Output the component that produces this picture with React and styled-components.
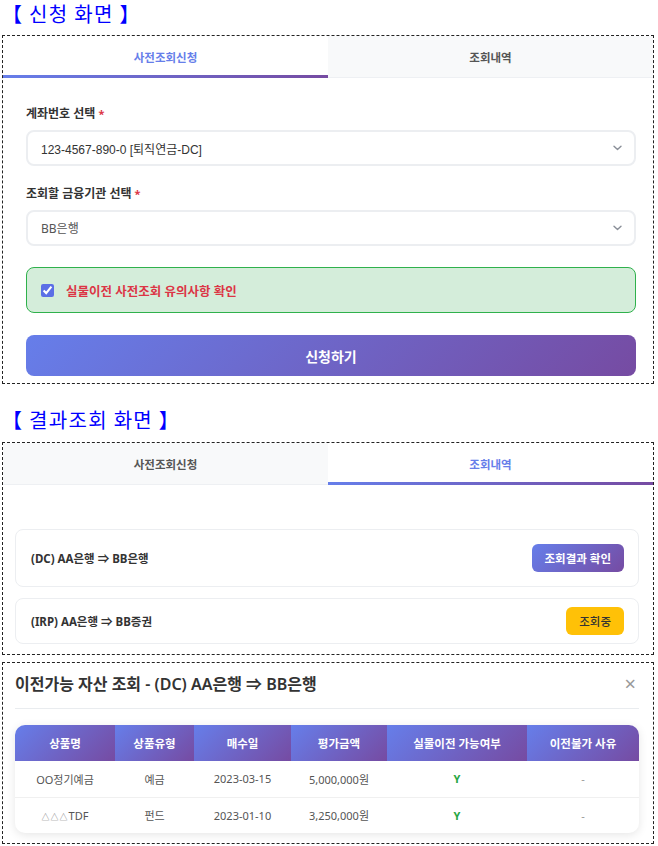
import React from 'react';
import styled, { createGlobalStyle, css } from 'styled-components';

const GRAD = 'linear-gradient(135deg, #667eea 0%, #764ba2 100%)';
const FONT = '"Noto Sans", "Noto Sans CJK KR", sans-serif';

const GlobalStyle = createGlobalStyle`
  * { box-sizing: border-box; }
  body {
    margin: 0;
    background: #ffffff;
    font-family: ${FONT};
    color: #333;
  }
`;

const Page = styled.div`
  width: 652px;
  margin-left: 2px;
  display: flex;
  flex-direction: column;
`;

const SectionTitle = styled.h2`
  margin: ${(p) => p.$mt || 0}px 0 0 0;
  height: 28px;
  line-height: 28px;
  font-family: "Noto Sans CJK KR", sans-serif;
  font-size: 20px;
  font-weight: 400;
  letter-spacing: 1.3px;
  color: #0000ff;
  white-space: pre;
`;

const Panel = styled.section`
  margin-top: ${(p) => p.$mt || 0}px;
  border: 1px dashed #222;
  background: #fff;
`;

const TabBar = styled.div`
  display: flex;
  border-bottom: 1px solid #eef0f3;
`;

const Tab = styled.div`
  position: relative;
  flex: 1;
  height: 41px;
  display: flex;
  align-items: center;
  justify-content: center;
  font-size: 11.5px;
  font-weight: 700;
  color: ${(p) => (p.$active ? '#667eea' : '#555')};
  background: ${(p) => (p.$active ? '#fff' : '#f8f9fa')};
  ${(p) =>
    p.$active &&
    css`
      &::after {
        content: '';
        position: absolute;
        left: 0;
        right: 0;
        bottom: -1px;
        height: 3px;
        background: linear-gradient(90deg, #667eea, #764ba2);
      }
    `}
`;

const Form = styled.div`
  padding: 27px 17px 7px 23px;
  display: flex;
  flex-direction: column;
`;

const Field = styled.div`
  display: flex;
  flex-direction: column;
  margin-bottom: ${(p) => p.$mb || 0}px;
`;

const Label = styled.label`
  font-size: 12px;
  line-height: 17px;
  font-weight: 700;
  color: #333;
  margin-bottom: 8px;
`;

const Required = styled.span`
  color: #dc3545;
  margin-left: 3px;
  font-size: 11px;
`;

const SelectBox = styled.div`
  height: 36px;
  border: 2px solid #eceef1;
  border-radius: 8px;
  background: #fff;
  display: flex;
  align-items: center;
  justify-content: space-between;
  padding: 0 12px 0 13px;
  font-family: ${(p) => (p.$arial ? '"Liberation Sans", "Noto Sans CJK KR", sans-serif' : FONT)};
  font-size: 12px;
  color: ${(p) => (p.$arial ? '#333' : '#555')};
`;

const Chevron = () => (
  <svg width="9" height="6" viewBox="0 0 9 6" fill="none">
    <path d="M1 1.2L4.5 4.6L8 1.2" stroke="#8a8f98" strokeWidth="1.4" strokeLinecap="round" strokeLinejoin="round" />
  </svg>
);

const Notice = styled.label`
  margin-top: 21px;
  height: 46px;
  border: 1px solid #2fb14c;
  border-radius: 8px;
  background: #d4edda;
  display: flex;
  align-items: center;
  padding-left: 14px;
  gap: 12px;
`;

const CheckInput = styled.input`
  width: 13px;
  height: 13px;
  margin: 0;
  accent-color: #5b6fe6;
`;

const NoticeText = styled.span`
  font-size: 12.5px;
  font-weight: 700;
  color: #dc3545;
`;

const SubmitButton = styled.button`
  margin-top: 22px;
  height: 41px;
  border: none;
  border-radius: 8px;
  background: ${GRAD};
  color: #fff;
  font-family: ${FONT};
  font-size: 14px;
  font-weight: 700;
  cursor: pointer;
`;

const HistoryList = styled.div`
  padding: 44px 14px 10px 12px;
  display: flex;
  flex-direction: column;
  gap: 11px;
`;

const HistoryCard = styled.div`
  border: 1px solid #eceef1;
  border-radius: 8px;
  background: #fff;
  display: flex;
  align-items: center;
  justify-content: space-between;
  padding: ${(p) => p.$pv}px 14px ${(p) => p.$pv}px 15px;
`;

const HistoryText = styled.span`
  font-size: 11.5px;
  font-weight: 700;
  color: #333;
`;

const ActionButton = styled.button`
  height: 28px;
  padding: 0 13px;
  border: none;
  border-radius: 6px;
  font-family: ${FONT};
  font-size: 11.5px;
  font-weight: 700;
  ${(p) =>
    p.$pending
      ? css`
          background: #ffc107;
          color: #333;
          font-weight: 500;
        `
      : css`
          background: ${GRAD};
          color: #fff;
        `}
`;

const ModalBody = styled.div`
  padding: 9px 14px 10px 12px;
`;

const ModalHead = styled.div`
  display: flex;
  align-items: center;
  justify-content: space-between;
  padding-bottom: 12px;
  border-bottom: 1px solid #e9ecef;
`;

const ModalTitle = styled.h3`
  margin: 0;
  font-size: 16px;
  line-height: 24px;
  font-weight: 600;
  color: #333;
`;

const CloseButton = styled.span`
  font-size: 20px;
  line-height: 24px;
  color: #999;
  margin-right: 3px;
`;

const TableWrap = styled.div`
  margin-top: 16px;
  border-radius: 10px;
  overflow: hidden;
  box-shadow: 0 2px 10px rgba(0, 0, 0, 0.1);
`;

const Table = styled.table`
  width: 100%;
  border-collapse: collapse;
  table-layout: fixed;
`;

const Th = styled.th`
  width: ${(p) => p.$w}px;
  height: 36px;
  padding: 0;
  background: ${GRAD};
  color: #fff;
  font-size: 11.5px;
  font-weight: 700;
  text-align: center;
`;

const Td = styled.td`
  height: 36px;
  padding: 0;
  text-align: center;
  font-size: 11px;
  color: #555;
  border-bottom: ${(p) => (p.$last ? 'none' : '1px solid #f0f0f0')};
`;

const SmallMark = styled.span`
  font-size: 8px;
  letter-spacing: 1px;
  color: #777;
`;

const Yes = styled.span`
  color: #28a745;
  font-weight: 700;
`;

const Dash = styled.span`
  color: #999;
`;

const columns = [
  ['상품명', 100],
  ['상품유형', 79],
  ['매수일', 97],
  ['평가금액', 96],
  ['실물이전 가능여부', 140],
  ['이전불가 사유', 112],
];

const rows = [
  [<span key="a">OO정기예금</span>, '예금', '2023-03-15', '5,000,000원'],
  [
    <span key="b">
      <SmallMark>△△△</SmallMark>TDF
    </span>,
    '펀드',
    '2023-01-10',
    '3,250,000원',
  ],
];

export default function App() {
  return (
    <>
      <GlobalStyle />
      <Page>
        <SectionTitle>{'【 신청 화면 】'}</SectionTitle>
        <Panel $mt={7}>
          <TabBar>
            <Tab $active>사전조회신청</Tab>
            <Tab>조회내역</Tab>
          </TabBar>
          <Form>
            <Field $mb={19}>
              <Label>
                계좌번호 선택<Required>*</Required>
              </Label>
              <SelectBox $arial>
                <span>123-4567-890-0 [퇴직연금-DC]</span>
                <Chevron />
              </SelectBox>
            </Field>
            <Field>
              <Label>
                조회할 금융기관 선택<Required>*</Required>
              </Label>
              <SelectBox>
                <span>BB은행</span>
                <Chevron />
              </SelectBox>
            </Field>
            <Notice>
              <CheckInput type="checkbox" defaultChecked />
              <NoticeText>실물이전 사전조회 유의사항 확인</NoticeText>
            </Notice>
            <SubmitButton>신청하기</SubmitButton>
          </Form>
        </Panel>

        <SectionTitle $mt={22}>{'【 결과조회 화면 】'}</SectionTitle>
        <Panel $mt={8}>
          <TabBar>
            <Tab>사전조회신청</Tab>
            <Tab $active>조회내역</Tab>
          </TabBar>
          <HistoryList>
            <HistoryCard $pv={14}>
              <HistoryText>(DC) AA은행 ⇒ BB은행</HistoryText>
              <ActionButton>조회결과 확인</ActionButton>
            </HistoryCard>
            <HistoryCard $pv={8}>
              <HistoryText>(IRP) AA은행 ⇒ BB증권</HistoryText>
              <ActionButton $pending>조회중</ActionButton>
            </HistoryCard>
          </HistoryList>
        </Panel>

        <Panel $mt={7}>
          <ModalBody>
            <ModalHead>
              <ModalTitle>이전가능 자산 조회 - (DC) AA은행 ⇒ BB은행</ModalTitle>
              <CloseButton>×</CloseButton>
            </ModalHead>
            <TableWrap>
              <Table>
                <thead>
                  <tr>
                    {columns.map(([name, w]) => (
                      <Th key={name} $w={w}>
                        {name}
                      </Th>
                    ))}
                  </tr>
                </thead>
                <tbody>
                  {rows.map((r, i) => (
                    <tr key={i}>
                      {r.map((c, j) => (
                        <Td key={j} $last={i === rows.length - 1}>
                          {c}
                        </Td>
                      ))}
                      <Td $last={i === rows.length - 1}>
                        <Yes>Y</Yes>
                      </Td>
                      <Td $last={i === rows.length - 1}>
                        <Dash>-</Dash>
                      </Td>
                    </tr>
                  ))}
                </tbody>
              </Table>
            </TableWrap>
          </ModalBody>
        </Panel>
      </Page>
    </>
  );
}
